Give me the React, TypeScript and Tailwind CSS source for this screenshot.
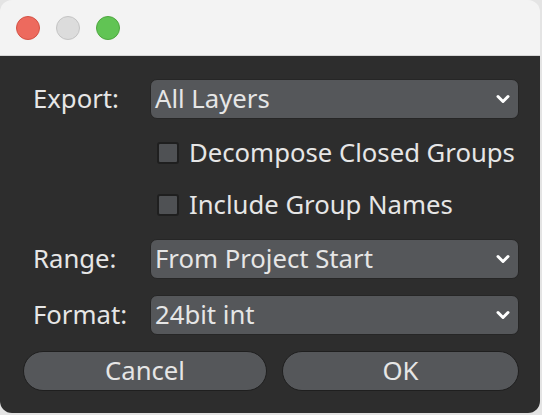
import React from 'react'

const font = { fontFamily: '"Noto Sans", "Open Sans", sans-serif' }

const Chevron = () => (
    <svg width="14" height="10" viewBox="0 0 14 10" className="shrink-0">
        <polyline points="2,2.5 7,7.5 12,2.5" fill="none" stroke="#ffffff" strokeWidth="3" strokeLinecap="round" strokeLinejoin="round" />
    </svg>
)

const Select = ({ value }: { value: string }) => (
    <div className="flex h-[40px] items-center justify-between rounded-[7px] border border-[#262626] bg-[#55575a] pl-[4px] pr-[8px] text-[#e6e6e6]">
        <span className="leading-none">{value}</span>
        <Chevron />
    </div>
)

const Check = ({ label }: { label: string }) => (
    <div className="col-start-2 flex h-[36px] items-center gap-[10px] pl-[7px]">
        <span className="h-[22px] w-[22px] rounded-[3px] border-2 border-[#1f1f1f] bg-[#4f5154]" />
        <span className="leading-none text-[#e6e6e6]">{label}</span>
    </div>
)

const Light = ({ color, ring }: { color: string; ring: string }) => (
    <span className={`h-[24px] w-[24px] rounded-full border ${color} ${ring}`} />
)

export default function App() {
    return (
        <div className="h-[415px] w-[542px] bg-[#e4e4e4]" style={font}>
            <div className="flex h-[413px] w-[540px] flex-col overflow-hidden rounded-[12px]">
                <div className="flex h-[56px] items-center gap-[16px] border-b border-[#d6d6d6] bg-[#f3f3f3] pl-[16px]">
                    <Light color="bg-[#ed6a5e]" ring="border-[#d45245]" />
                    <Light color="bg-[#dcdcdc]" ring="border-[#c4c4c4]" />
                    <Light color="bg-[#61c454]" ring="border-[#4ea73f]" />
                </div>
                <div className="flex-1 bg-[#2d2d2d] pl-[23px] pr-[21px] pt-[23px] text-[25.7px] text-[#e6e6e6]">
                    <div className="grid grid-cols-[127px_1fr] gap-y-[16px]">
                        <div className="flex items-center pl-[10px]">Export:</div>
                        <Select value="All Layers" />
                        <Check label="Decompose Closed Groups" />
                        <Check label="Include Group Names" />
                        <div className="flex items-center pl-[10px]">Range:</div>
                        <Select value="From Project Start" />
                        <div className="flex items-center pl-[10px]">Format:</div>
                        <Select value="24bit int" />
                    </div>
                    <div className="mt-[16px] grid grid-cols-[244px_1fr] gap-[15px]">
                        <button className="h-[40px] rounded-full border border-[#1f1f1f] bg-[#55575a] text-[#e6e6e6]">Cancel</button>
                        <button className="h-[40px] rounded-full border border-[#1f1f1f] bg-[#55575a] text-[#e6e6e6]">OK</button>
                    </div>
                </div>
            </div>
        </div>
    )
}
